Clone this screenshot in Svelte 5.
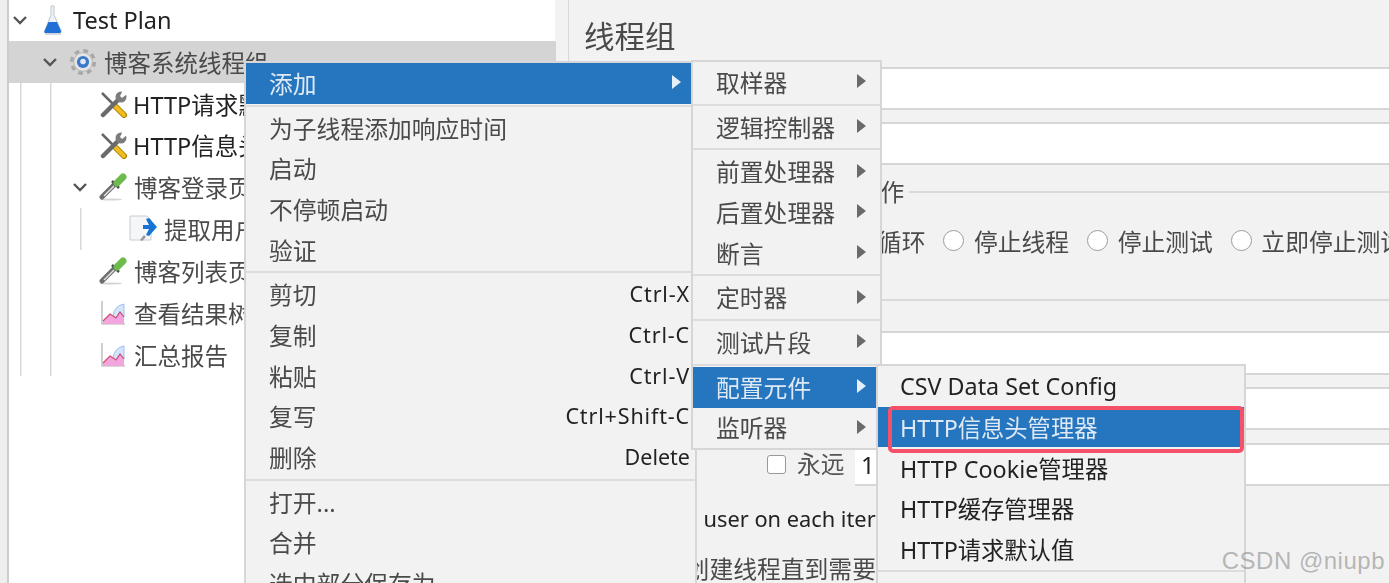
<script>
	const mainMenu = [
		{ label: '添加', arrow: true, active: true },
		{ sep: true },
		{ label: '为子线程添加响应时间' },
		{ label: '启动' },
		{ label: '不停顿启动' },
		{ label: '验证' },
		{ sep: true },
		{ label: '剪切', key: 'Ctrl-X' },
		{ label: '复制', key: 'Ctrl-C' },
		{ label: '粘贴', key: 'Ctrl-V' },
		{ label: '复写', key: 'Ctrl+Shift-C' },
		{ label: '删除', key: 'Delete' },
		{ sep: true },
		{ label: '打开...' },
		{ label: '合并' },
		{ label: '选中部分保存为' }
	];

	const addMenu = [
		{ label: '取样器', arrow: true },
		{ sep: true },
		{ label: '逻辑控制器', arrow: true },
		{ sep: true },
		{ label: '前置处理器', arrow: true },
		{ label: '后置处理器', arrow: true },
		{ label: '断言', arrow: true },
		{ sep: true },
		{ label: '定时器', arrow: true },
		{ sep: true },
		{ label: '测试片段', arrow: true },
		{ sep: true },
		{ label: '配置元件', arrow: true, active: true },
		{ label: '监听器', arrow: true }
	];

	const configMenu = [
		{ label: 'CSV Data Set Config' },
		{ label: 'HTTP信息头管理器', active: true },
		{ label: 'HTTP Cookie管理器' },
		{ label: 'HTTP缓存管理器' },
		{ label: 'HTTP请求默认值' },
		{ sep: true }
	];

	const radios = ['继续', '启动下一进程循环', '停止线程', '停止测试', '立即停止测试'];
</script>

{#snippet flask()}
	<svg width="20" height="30" viewBox="0 0 20 30">
		<path d="M8 1h3v9l7 15q1 3-2 3H4q-3 0-2-3l6-15z" fill="#eef2f7" stroke="#bcc6d0" />
		<path d="M5.500 17H14l4 9q.5 2-2 2H3q-2.500 0-1.500-2z" fill="#1f6fd6" />
		<path d="M2 29h16" stroke="#c8ccd2" stroke-width="1.500" />
	</svg>
{/snippet}

{#snippet gear()}
	<svg width="30" height="30" viewBox="0 0 30 30">
		<circle cx="15" cy="15" r="12" fill="none" stroke="#a8a8a8" stroke-width="4" stroke-dasharray="5 4.420" />
		<circle cx="15" cy="15" r="10" fill="#e4e4e4" stroke="#b4b4b4" />
		<circle cx="15" cy="15" r="6.500" fill="#3a78c8" />
		<circle cx="15" cy="14.500" r="3" fill="#dfe9f6" />
	</svg>
{/snippet}

{#snippet tools()}
	<svg width="28" height="28" viewBox="0 0 28 28">
		<path d="M3 3l11 11" stroke="#666" stroke-width="2.500" />
		<path d="M15 15l10 10" stroke="#a67c00" stroke-width="6" stroke-linecap="round" />
		<path d="M15 15l10 10" stroke="#f0bd1c" stroke-width="4" stroke-linecap="round" />
		<path d="M21 8L4 25" stroke="#6a6a6a" stroke-width="4.500" stroke-linecap="round" />
		<circle cx="22" cy="7" r="5.500" fill="#7c7c7c" />
		<path d="M21 6l3-6h4v4l-5 4z" fill="#fff" />
	</svg>
{/snippet}

{#snippet dropper()}
	<svg width="28" height="28" viewBox="0 0 28 28">
		<ellipse cx="12" cy="26.500" rx="11" ry="1" fill="#d4d4d4" />
		<path d="M3 24l12-12" stroke="#6e6e6e" stroke-width="5" stroke-linecap="round" />
		<path d="M5 23l10-10" stroke="#e4e4e4" stroke-width="1.500" />
		<path d="M13 8l7 7" stroke="#4a4a4a" stroke-width="2.500" />
		<path d="M18 10l6-6" stroke="#6cbb4c" stroke-width="7" stroke-linecap="round" />
	</svg>
{/snippet}

{#snippet doc()}
	<svg width="28" height="30" viewBox="0 0 28 30">
		<path d="M1 2h17l4 4v20H1z" fill="#f5f6f8" stroke="#c8ccd0" />
		<path d="M11 26l4-5 2 2-4 4z" fill="#999" />
		<path d="M14 11h6l-3-6 3-1 8 9-8 9-3-1 3-6h-6z" fill="#1574d4" />
	</svg>
{/snippet}

{#snippet chart()}
	<svg width="26" height="26" viewBox="0 0 26 26">
		<path d="M2 1v23h23" fill="none" stroke="#b0b0b0" stroke-width="1.200" />
		<path d="M3 24v-3l7-7 6 4 4-6 4 5v7z" fill="#f2a6dd" />
		<path d="M13 16Q14 6 24 4v13l-4-5-4 6z" fill="#d2e5fb" stroke="#9dc1ec" />
		<path d="M3 21l7-7 6 4 4-6 4 5" fill="none" stroke="#d8486e" stroke-width="1.200" />
	</svg>
{/snippet}

{#snippet treeRow(depth, icon, label, open = false, latin = false, selected = false)}
	<div class="tree-row" class:selected style="--d: {depth}">
		<span class="twist">
			{#if open}
				<svg width="16" height="10" viewBox="0 0 16 10"><path d="M2 2l6 6 6-6" fill="none" stroke="#555" stroke-width="2.400" /></svg>
			{/if}
		</span>
		<span class="icon">{@render icon()}</span>
		<span class="tree-label" class:latin>{label}</span>
	</div>
{/snippet}

{#snippet menuItems(items)}
	{#each items as item}
		{#if item.sep}
			<div class="sep"></div>
		{:else}
			<div class="item" class:active={item.active}>
				<span class="label">{item.label}</span>
				{#if item.key}<span class="key" class:ctrl={item.key.startsWith('Ctrl')}>{item.key}</span>{/if}
				{#if item.arrow}<span class="arrow"></span>{/if}
			</div>
		{/if}
	{/each}
{/snippet}

<div class="shot">
	<div class="window">
		<div class="strip"></div>

		<div class="tree">
			{@render treeRow(0, flask, 'Test Plan', true, true)}
			{@render treeRow(1, gear, '博客系统线程组', true, false, true)}
			<div class="branch">
				{@render treeRow(2, tools, 'HTTP请求默认值', false, true)}
				{@render treeRow(2, tools, 'HTTP信息头管理器', false, true)}
				{@render treeRow(2, dropper, '博客登录页面', true)}
				<div class="deep">
					{@render treeRow(3, doc, '提取用户信息')}
				</div>
				{@render treeRow(2, dropper, '博客列表页面')}
				{@render treeRow(2, chart, '查看结果树')}
				{@render treeRow(2, chart, '汇总报告')}
			</div>
		</div>

		<div class="divider"></div>

		<div class="panel">
			<h1>线程组</h1>
			<div class="field first">
				<span class="cap">名称：</span>
				<div class="input"></div>
			</div>
			<div class="field">
				<span class="cap">注释：</span>
				<div class="input"></div>
			</div>

			<div class="legend top"><span>在取样器错误后要执行的动作</span></div>
			<div class="radios">
				{#each radios as r, i}
					<span class="radio-item"><span class="radio" class:on={i === 0}></span>{r}</span>
				{/each}
			</div>

			<div class="legend second"><span>线程属性</span></div>
			<div class="field tall">
				<span class="cap">线程数：</span>
				<div class="input"></div>
			</div>
			<div class="field ramp">
				<span class="cap">Ramp-Up时间（秒）：</span>
				<div class="input"></div>
			</div>
			<div class="field loops">
				<span class="cap">循环次数</span>
				<span class="forever"><span class="box"></span>永远</span>
				<div class="input fixed">1</div>
			</div>
			<div class="check-row same"><span class="box"></span><span class="latin">Same user on each iteration</span></div>
			<div class="check-row delay"><span class="box"></span>延迟创建线程直到需要</div>
		</div>
	</div>

	<div class="menu main">{@render menuItems(mainMenu)}</div>
	<div class="menu add">{@render menuItems(addMenu)}</div>
	<div class="menu config">{@render menuItems(configMenu)}</div>
</div>

<div class="callout"></div>
<div class="mark">CSDN @niupb</div>

<style>
	:global(body) {
		margin: 0;
		overflow: hidden;
		background: #f2f2f2;
	}

	/* the reference is an upscaled capture, so everything is a little soft */
	.shot {
		position: relative;
		width: 1389px;
		height: 583px;
		overflow: hidden;
		filter: blur(0.45px);
	}

	.window {
		display: flex;
		height: 583px;
		overflow: hidden;
		background: #f2f2f2;
		color: #4a4a4a;
		font-family: 'Noto Sans', 'Noto Sans CJK SC', sans-serif;
		font-size: 23.800px;
	}

	.strip {
		flex: none;
		width: 7px;
		background: #eeeeee;
		border-right: 2px solid #cdcdcd;
	}

	.tree {
		flex: none;
		width: 546px;
		margin-top: -1px;
		background: #fff;
	}
	.tree-row {
		display: flex;
		align-items: center;
		height: 41.850px;
		padding-left: calc(2px + 30px * var(--d));
		white-space: nowrap;
		font-size: 23.500px;
	}
	.tree-row.selected {
		margin-right: -1px;
		background: #d4d4d4;
	}
	.twist {
		display: flex;
		align-items: center;
		justify-content: center;
		flex: none;
		width: 18px;
		margin-right: 10px;
	}
	.icon {
		display: flex;
		align-items: center;
		justify-content: center;
		flex: none;
		width: 28px;
		margin-right: 7px;
	}
	.tree-label.latin {
		margin-left: -1px;
		color: #222;
	}
	.branch {
		background:
			linear-gradient(#d8d8d8, #d8d8d8) 11px 0 / 1.500px 100% no-repeat,
			linear-gradient(#d8d8d8, #d8d8d8) 41px 0 / 1.500px 100% no-repeat;
	}
	.deep {
		background: linear-gradient(#d8d8d8, #d8d8d8) 71px 0 / 1.500px 100% no-repeat;
	}

	.divider {
		flex: none;
		width: 13px;
		border-right: 1px solid #d8d8d8;
	}

	.panel {
		flex: 1;
		min-width: 0;
		white-space: nowrap;
	}
	h1 {
		height: 67px;
		margin: 0;
		padding-left: 15px;
		box-sizing: border-box;
		font-size: 30.500px;
		font-weight: 400;
		line-height: 72px;
		color: #4a4a4a;
	}
	.field {
		display: flex;
		align-items: stretch;
		height: 43px;
		margin-top: 12px;
		padding-left: 17px;
		line-height: 43px;
	}
	.field.first {
		margin-top: 0;
	}
	.cap {
		flex: none;
		width: 60px;
	}
	.input {
		flex: 1;
		background: #fff;
		border-top: 2px solid #d6d6d6;
		border-bottom: 2px solid #d6d6d6;
		box-sizing: border-box;
	}
	.field.tall {
		height: 44px;
		margin-top: 19px;
	}
	.field.tall .cap,
	.field.ramp .cap {
		width: 240px;
	}
	.field.loops .cap {
		width: 181px;
	}
	.field.loops {
		margin-top: 13px;
		color: #555;
	}
	.forever {
		display: flex;
		align-items: center;
		gap: 11px;
		flex: none;
		width: 88px;
	}
	.input.fixed {
		padding-left: 6px;
		color: #222;
		line-height: 40px;
	}

	.legend {
		display: flex;
		align-items: center;
		gap: 5px;
		height: 24px;
		margin-top: 15px;
		padding-left: 26px;
		line-height: 24px;
	}
	.legend::after {
		content: '';
		flex: 1;
		height: 2px;
		background: #dadada;
	}
	.legend.second {
		margin-top: 28px;
		height: 24px;
	}
	.radios {
		display: flex;
		align-items: center;
		gap: 18px;
		height: 40px;
		margin-top: 16px;
		padding-left: 39.500px;
	}
	.radio-item {
		display: flex;
		align-items: center;
		gap: 9.500px;
	}
	.radio {
		flex: none;
		width: 19px;
		height: 19px;
		border: 1.500px solid #9c9c9c;
		border-radius: 50%;
		background: #fff;
	}
	.radio.on {
		background: radial-gradient(#666 35%, #fff 40%);
	}
	.box {
		flex: none;
		width: 17px;
		height: 17px;
		border: 1.500px solid #999;
		border-radius: 3px;
		background: #fff;
	}
	.check-row {
		display: flex;
		align-items: center;
		gap: 8px;
		height: 30px;
		padding-left: 45px;
	}
	.check-row.same {
		margin-top: 17px;
		font-size: 21.800px;
		color: #222;
	}
	.check-row.delay {
		margin-top: 19px;
		padding-left: 42px;
	}

	.menu {
		position: absolute;
		box-sizing: border-box;
		overflow: hidden;
		background: #f2f2f2;
		border: 2px solid #d6d6d6;
		font-family: 'Noto Sans', 'Noto Sans CJK SC', sans-serif;
		font-size: 23.800px;
		color: #4a4a4a;
		white-space: nowrap;
	}
	.menu.main {
		left: 244px;
		top: 61px;
		width: 453px;
		height: 522px;
		border-bottom: 0;
	}
	.menu.add {
		left: 691px;
		top: 60px;
		width: 191px;
		height: 390px;
	}
	.menu.config {
		left: 876px;
		top: 364px;
		width: 370px;
		height: 219px;
		border-bottom: 0;
		font-size: 23.300px;
		color: #222;
	}
	.item {
		display: flex;
		align-items: center;
		box-sizing: border-box;
		height: 40.700px;
		padding: 0 14px 2px 23px;
	}
	.config .item {
		padding: 0 14px 0 22px;
	}
	.item.active {
		background: #2675bf;
		color: #dfe9f4;
	}
	.label {
		flex: 1;
	}
	.key {
		margin-right: -9px;
		font-size: 21.500px;
		color: #222;
	}
	.key.ctrl {
		letter-spacing: 0.85px;
	}
	.arrow {
		flex: none;
		width: 0;
		height: 0;
		border-left: 9px solid #6a6a6a;
		border-top: 7px solid transparent;
		border-bottom: 7px solid transparent;
	}
	.active .arrow {
		border-left-color: #e6eef7;
	}
	.sep {
		height: 2px;
		margin: 1px 0;
		background: #dcdcdc;
	}

	.callout {
		position: absolute;
		left: 888px;
		top: 406px;
		width: 356px;
		height: 47px;
		box-sizing: border-box;
		border: 4px solid #f5526a;
		border-radius: 5px;
	}
	.mark {
		position: absolute;
		right: 4px;
		top: 547px;
		font-family: 'Liberation Sans', sans-serif;
		font-size: 24px;
		letter-spacing: 0.5px;
		color: rgba(120, 120, 120, 0.5);
	}
</style>
